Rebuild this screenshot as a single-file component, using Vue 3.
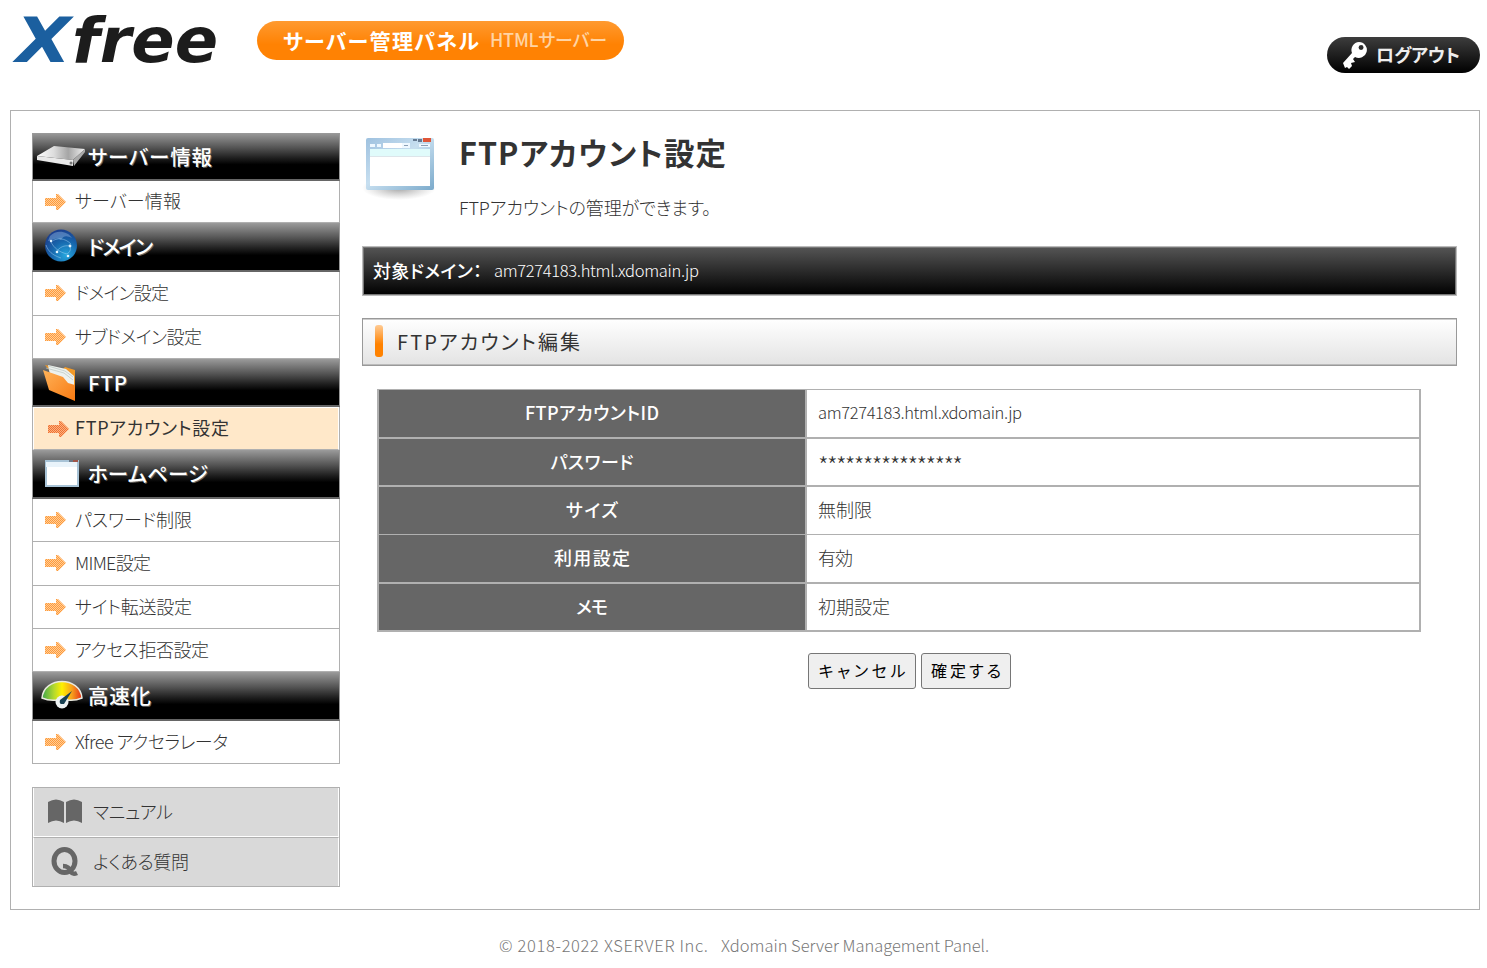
<script setup>
const groups = [
  { icon: 'drive', label: 'サーバー情報', width: 124, items: [{ label: 'サーバー情報', width: 106 }] },
  {
    icon: 'globe', label: 'ドメイン', width: 65,
    items: [{ label: 'ドメイン設定', width: 94 }, { label: 'サブドメイン設定', width: 127 }],
  },
  { icon: 'folder', label: 'FTP', width: 39, items: [{ label: 'FTPアカウント設定', width: 154, active: true }] },
  {
    icon: 'window', label: 'ホームページ', width: 120,
    items: [
      { label: 'パスワード制限', width: 117 },
      { label: 'MIME設定', width: 76 },
      { label: 'サイト転送設定', width: 117 },
      { label: 'アクセス拒否設定', width: 134 },
    ],
  },
  { icon: 'gauge', label: '高速化', width: 63, items: [{ label: 'Xfree アクセラレータ', width: 153 }] },
]

const rows = [
  { head: 'FTPアカウントID', headWidth: 134, value: 'am7274183.html.xdomain.jp', width: 204, kind: 'latin' },
  { head: 'パスワード', headWidth: 83, value: '****************', width: 145, kind: 'secret' },
  { head: 'サイズ', headWidth: 52, value: '無制限', width: 54 },
  { head: '利用設定', headWidth: 76, value: '有効', width: 35 },
  { head: 'メモ', headWidth: 32, value: '初期設定', width: 72 },
]

// Tracks a label so that it spans the given width in pixels.
const vFit = {
  mounted(el, { value }) {
    const count = [...el.textContent].length
    const gap = (value - el.getBoundingClientRect().width) / Math.max(1, count - 1)
    el.style.letterSpacing = `${gap}px`
    el.style.marginRight = `${-gap}px`
  },
}
</script>

<template>
  <div class="page">
    <header class="top">
      <svg class="logo" width="220" height="100" viewBox="0 0 220 100">
        <text class="logo-x" x="6" y="62" textLength="55" lengthAdjust="spacingAndGlyphs">X</text>
        <text class="logo-free" x="62" y="62" textLength="146" lengthAdjust="spacingAndGlyphs">free</text>
      </svg>
      <div class="panel-pill">
        <span v-fit="196" class="pill-main">サーバー管理パネル</span>
        <span v-fit="117" class="pill-sub">HTMLサーバー</span>
      </div>
      <a class="logout">
        <svg width="26" height="28" viewBox="0 0 26 28">
          <path fill="#fff" fill-rule="evenodd" d="M17 1a8 8 0 1 1-4 15l-2 2 2 3-4 1 1 3-3 3-2-2-2 1-2-5 9-10a8 8 0 0 1 7-11zm2 3a2.500 2.500 0 1 0 .1 5 2.500 2.500 0 0 0-.1-5z" />
        </svg>
        <span v-fit="84">ログアウト</span>
      </a>
    </header>

    <div class="frame">
      <aside class="side">
        <nav class="menu">
          <template v-for="group in groups" :key="group.label">
            <div class="group">
              <span class="group-icon">
                <svg v-if="group.icon === 'drive'" width="50" height="24" viewBox="0 0 50 24">
                  <defs>
                    <linearGradient id="driveTop" x1="0" x2="1" y1="0" y2="0">
                      <stop offset="0" stop-color="#fff" /><stop offset=".35" stop-color="#ddd" />
                      <stop offset=".65" stop-color="#a5a5a5" /><stop offset="1" stop-color="#f2f2f2" />
                    </linearGradient>
                  </defs>
                  <path fill="url(#driveTop)" d="M1 11 18 1l31 3-12 11z" />
                  <path fill="#e9e9e9" d="M1 11l36 4v6L1 15z" />
                  <path fill="#aaa" d="M37 15 49 4v3L38 21z" />
                  <circle cx="35" cy="18" r="1.5" fill="#777" />
                </svg>
                <svg v-else-if="group.icon === 'globe'" width="50" height="36" viewBox="0 0 50 36">
                  <defs>
                    <radialGradient id="globeFill" cx=".65" cy=".8" r=".8">
                      <stop offset="0" stop-color="#25a5dd" /><stop offset=".55" stop-color="#1766ac" /><stop offset="1" stop-color="#1b408f" />
                    </radialGradient>
                  </defs>
                  <circle cx="25" cy="16.500" r="16" fill="url(#globeFill)" />
                  <path fill="#8fb3df" opacity=".45" d="M14 7c6-7 18-5 22 2-5-2-8-3-11 2-6-4-10 2-13 1z" />
                  <g transform="translate(1 -1)">
                    <path fill="none" stroke="#a8d5f5" stroke-width=".6" stroke-opacity=".8" d="M14 14c3 6 8 10 16 12M14 14c6-5 14-4 20 2M33 18c1 4 0 6-3 8M19 24c4-5 8-7 14-6M9 17c2 6 6 10 15 13" />
                    <g fill="#e5f5ff"><circle cx="14" cy="13" r="1.2" /><circle cx="20" cy="24" r="1.3" /><circle cx="33" cy="18" r="1.4" /><circle cx="31" cy="28" r="1.3" /></g>
                  </g>
                </svg>
                <svg v-else-if="group.icon === 'folder'" width="50" height="38" viewBox="0 0 50 38">
                  <defs>
                    <linearGradient id="folderFill" x2="1" y2="1"><stop stop-color="#ffb258" /><stop offset="1" stop-color="#f87a12" /></linearGradient>
                  </defs>
                  <path fill="#f29a28" d="M9 1l18 4 2-2 10 3v29z" />
                  <path fill="#edf1ee" d="M12 1l18 4 8 7v18L15 16z" />
                  <path fill="none" stroke="#b9c5c2" stroke-width=".7" d="M10 4l18 5 9 7M12 2l17 5 8 6" />
                  <path fill="url(#folderFill)" d="M7 6l20 7 5 6 7 2v16L13 26z" />
                </svg>
                <svg v-else-if="group.icon === 'window'" width="50" height="30" viewBox="0 0 50 30">
                  <path fill="#a8c3d6" d="M9 1h34v27H9z" /><path fill="#e9f3fa" d="M10 3h31v5H10z" />
                  <path fill="#fff" d="M11 8h30v18H11z" /><path fill="#6b7785" d="M33 1h4v2h-4z" /><path fill="#a05548" d="M37 1h5v2h-5z" />
                </svg>
                <svg v-else width="50" height="36" viewBox="0 0 50 36">
                  <defs>
                    <linearGradient id="gaugeFill"><stop stop-color="#3fa64b" /><stop offset=".3" stop-color="#b4d92e" /><stop offset=".5" stop-color="#fff000" /><stop offset=".75" stop-color="#f6a01c" /><stop offset="1" stop-color="#e62e18" /></linearGradient>
                  </defs>
                  <path fill="url(#gaugeFill)" stroke="#e9e9de" stroke-width="1.5" d="M6 20C8-2 44-2 46 20q-7 3-15 2-5-7-10 0-8 1-15-2z" />
                  <circle cx="26" cy="24" r="6.500" fill="#edf1f2" /><path fill="#174052" d="M36 13 24 22q-1 3 1 4h3z" />
                </svg>
              </span>
              <span v-fit="group.width" class="group-label">{{ group.label }}</span>
            </div>
            <a v-for="item in group.items" :key="item.label" class="item" :class="{ active: item.active }">
              <svg class="arrow" width="21" height="18" viewBox="0 0 21 18">
                <defs>
                  <pattern id="dots" width="2" height="2" patternUnits="userSpaceOnUse">
                    <path d="M0 0h1v1H0zM1 1h1v1H1z" fill="#ff993b" /><path d="M1 0h1v1H1zM0 1h1v1H0z" fill="#ffce96" />
                  </pattern>
                  <pattern id="dotsOn" width="2" height="2" patternUnits="userSpaceOnUse">
                    <path d="M0 0h1v1H0zM1 1h1v1H1z" fill="#f27032" /><path d="M1 0h1v1H1zM0 1h1v1H0z" fill="#f9b381" />
                  </pattern>
                </defs>
                <path :fill="item.active ? 'url(#dotsOn)' : 'url(#dots)'" d="M0 5h11V1h2l8 8-8 8h-2v-4H0z" />
              </svg>
              <span v-fit="item.width">{{ item.label }}</span>
            </a>
          </template>
        </nav>

        <nav class="help">
          <a class="help-item">
            <svg width="34" height="26" viewBox="0 0 34 26">
              <path fill="#666" d="M0 3q8-5 16 0v21q-8-5-16 0zM18 3q8-5 16 0v21q-8-5-16 0z" />
            </svg>
            <span v-fit="80">マニュアル</span>
          </a>
          <a class="help-item">
            <svg width="34" height="30" viewBox="0 0 34 30">
              <ellipse cx="16.500" cy="14" rx="10.500" ry="11.500" fill="none" stroke="#666" stroke-width="5" />
              <path fill="none" stroke="#666" stroke-width="4.500" d="M15 19q6 0 8 6 2 3 6 1" />
            </svg>
            <span v-fit="96">よくある質問</span>
          </a>
        </nav>
      </aside>

      <main class="main">
        <div class="intro">
          <svg class="intro-icon" width="76" height="66" viewBox="0 0 76 66">
            <defs>
              <linearGradient id="frameFill" x2="1" y2="1"><stop stop-color="#9ec1df" /><stop offset=".45" stop-color="#c7dff0" /><stop offset="1" stop-color="#7baacb" /></linearGradient>
              <radialGradient id="shade"><stop stop-color="#888" stop-opacity=".8" /><stop offset="1" stop-color="#aaa" stop-opacity="0" /></radialGradient>
            </defs>
            <ellipse cx="37" cy="53" rx="37" ry="12" fill="url(#shade)" />
            <rect x="4" y="3" width="68" height="52" rx="2" fill="url(#frameFill)" />
            <path fill="#fff" d="M8 14h60v37H8zM21 8h19v5H21z" />
            <path fill="#e0fbfb" d="M8 14h60v7H8z" /><path stroke="#dde5ea" d="M8 21.500h60" />
            <path fill="#eef8ff" d="M8 9h5v3H8zM15 9h4v3h-4zM40 8h8v5h-8zM57 9h11v3H57z" />
            <path fill="#8b9fb5" d="M42 10h4v1h-4zM59 10h7v1h-7z" />
            <path fill="#667b93" d="M51 4h4v2h-4zM56 4h4v3h-4z" /><path fill="#df5638" d="M61 3h8v4h-8z" />
          </svg>
          <div>
            <h1><span v-fit="267">FTPアカウント設定</span></h1>
            <p><span v-fit="252">FTPアカウントの管理ができます。</span></p>
          </div>
        </div>

        <div class="domain-bar">
          <strong v-fit="109">対象ドメイン：</strong>
          <span v-fit="205" class="latin">am7274183.html.xdomain.jp</span>
        </div>

        <h2 class="section"><i class="section-mark"></i><span v-fit="183">FTPアカウント編集</span></h2>

        <div class="table">
          <div v-for="row in rows" :key="row.head" class="row">
            <div class="cell-head"><span v-fit="row.headWidth">{{ row.head }}</span></div>
            <div class="cell"><span v-fit="row.width" :class="row.kind">{{ row.value }}</span></div>
          </div>
        </div>

        <div class="actions">
          <button type="button" class="cancel"><span v-fit="87">キャンセル</span></button>
          <button type="button" class="submit"><span v-fit="70">確定する</span></button>
        </div>
      </main>
    </div>

    <footer class="foot">
      <span v-fit="209" class="latin">© 2018-2022 XSERVER Inc.</span>
      <span v-fit="268" class="latin">Xdomain Server Management Panel.</span>
    </footer>
  </div>
</template>

<style>
body { background: #fff; }
</style>

<style scoped>
.page, .page * { box-sizing: border-box; }
.page {
  width: 1487px;
  height: 968px;
  overflow: hidden;
  color: #333;
  font: 300 18px/1 "Noto Sans CJK JP", sans-serif;
  font-feature-settings: "palt";
}
.page span, .page strong { white-space: nowrap; flex: none; padding-bottom: 3px; }
.page svg { display: block; flex: none; }
.page .latin { font-size: 16.500px; padding-bottom: 2px; }
.top { display: flex; align-items: flex-start; height: 110px; padding: 0 7px 0 10px; }
.logo text { font: italic bold 63px "DejaVu Sans", sans-serif; }
.logo .logo-x { fill: #1b5f9f; }
.logo .logo-free { fill: #1c1c1c; }
.panel-pill {
  display: flex; align-items: center; width: 367px; height: 39px; margin: 21px 0 0 27px; padding-left: 26px;
  border-radius: 20px; background: linear-gradient(#ff9a30, #ff8203 60%); color: #fff; font-weight: 700;
}
.page .pill-main { font-size: 21px; padding-bottom: 1px; }
.page .pill-sub { margin-left: 11px; font-size: 18px; font-weight: 500; color: #ffd4a4; }
.logout {
  display: flex; align-items: center; width: 153px; height: 36px; margin: 37px 0 0 auto; padding-left: 15px;
  border-radius: 18px; background: linear-gradient(#3d3d3d, #000); color: #eee; font-weight: 700; font-size: 18px;
}
.logout svg { margin-right: 8px; }
.frame { display: flex; width: 1470px; height: 800px; margin-left: 10px; padding: 22px 22px 0 21px; border: 1px solid #b0b0b0; }
.side { width: 308px; margin-right: 22px; flex: none; }
.menu {
  display: grid; grid-template-rows: 48px 42px 49px 44px 43px 48px 43px 49px 43px 44px 43px 43px 49px 42px;
  border: solid #b0b0b0; border-width: 0 1px 1px;
}
.group {
  display: flex; align-items: center; margin: 0 -1px; padding-left: 3px; color: #fff; font-size: 20.500px; font-weight: 500;
  border: 1px solid #999; border-bottom: 2px solid #666; background: linear-gradient(#969696, #555 30%, #222 52%, #000 68%);
}
.page .group-icon { width: 52px; padding: 0; }
.page .group-label { padding-bottom: 1px; text-shadow: 1px 1px 0 #666; }
.item { display: flex; align-items: center; padding-left: 12px; border-bottom: 1px solid #b0b0b0; }
.menu .item:last-child { border-bottom: 0; }
.arrow { align-self: flex-start; margin: 12px 9px 0 0; }
.item.active { padding-left: 14px; background: #ffe8c9; border: 1px solid #fff; border-bottom-color: #b0b0b0; font-weight: 400; }
.item.active .arrow { margin: 12px 6px 0 0; }
.help { margin-top: 23px; border: 1px solid #b0b0b0; }
.help-item { display: flex; align-items: center; height: 49px; padding-left: 14px; border: 1px solid #fff; border-top: 0; background: #d9d9d9; }
.help-item + .help-item { border-bottom: 0; border-top: 1px solid #b0b0b0; }
.help-item svg { margin-right: 11px; }
.main { width: 1095px; }
.intro { display: flex; height: 113px; }
.intro-icon { margin-top: 2px; }
.intro > div { margin-left: 21px; }
h1 { margin: 3px 0 0; font-size: 30.500px; line-height: 32px; font-weight: 700; }
p { margin: 30px 0 0; line-height: 18px; }
.domain-bar {
  display: flex; align-items: center; height: 50px; padding-left: 10px; color: #fff;
  border: 1px solid #bbb; box-shadow: inset 0 0 0 1px #777; background: linear-gradient(#555, #000);
}
.domain-bar strong { font-weight: 500; }
.domain-bar span { margin-left: 12px; }
.section {
  display: flex; align-items: center; height: 48px; margin: 22px 0 0; padding-left: 12px; font-size: 20px; font-weight: 400;
  border: 1px solid #999; box-shadow: inset 0 1px #ccc, inset 0 -1px #bbb; background: linear-gradient(#fff, #e3e3e3);
}
.page .section span { padding-bottom: 0; }
.section-mark { width: 8px; height: 32px; margin: 0 14px 2px 0; border-radius: 3px; background: linear-gradient(#ffcb94, #ff8200 60%); }
.table {
  display: grid; grid-template-rows: 49px 48px 48px 49px 48px; width: 1044px; margin: 23px 0 0 15px;
  border: solid #b0b0b0; border-width: 1px 2px 0;
}
.row { display: grid; grid-template-columns: 428px 1fr; border-bottom: 2px solid #b0b0b0; }
.row:nth-child(3) { border-bottom-width: 1px; }
.cell-head { display: flex; align-items: center; justify-content: center; background: #666; border-right: 2px solid #b0b0b0; color: #fff; font-weight: 500; }
.cell { display: flex; align-items: center; padding-left: 11px; }
.page .cell .latin { padding-bottom: 3px; }
.page .secret { padding: 6px 0 0; font-size: 24px; }
.actions { display: flex; gap: 5px; margin: 21px 0 0 446px; }
button {
  height: 36px; padding: 0; border: 1px solid #767676; border-radius: 3px; background: #efefef; color: #000;
  display: flex; align-items: center; justify-content: center; font: 400 16px/1 "Noto Sans CJK JP", sans-serif; font-feature-settings: "palt";
}
.cancel { width: 108px; }
.submit { width: 90px; }
.foot { display: flex; gap: 13px; margin: 27px 0 0 499px; color: #777; }
</style>
